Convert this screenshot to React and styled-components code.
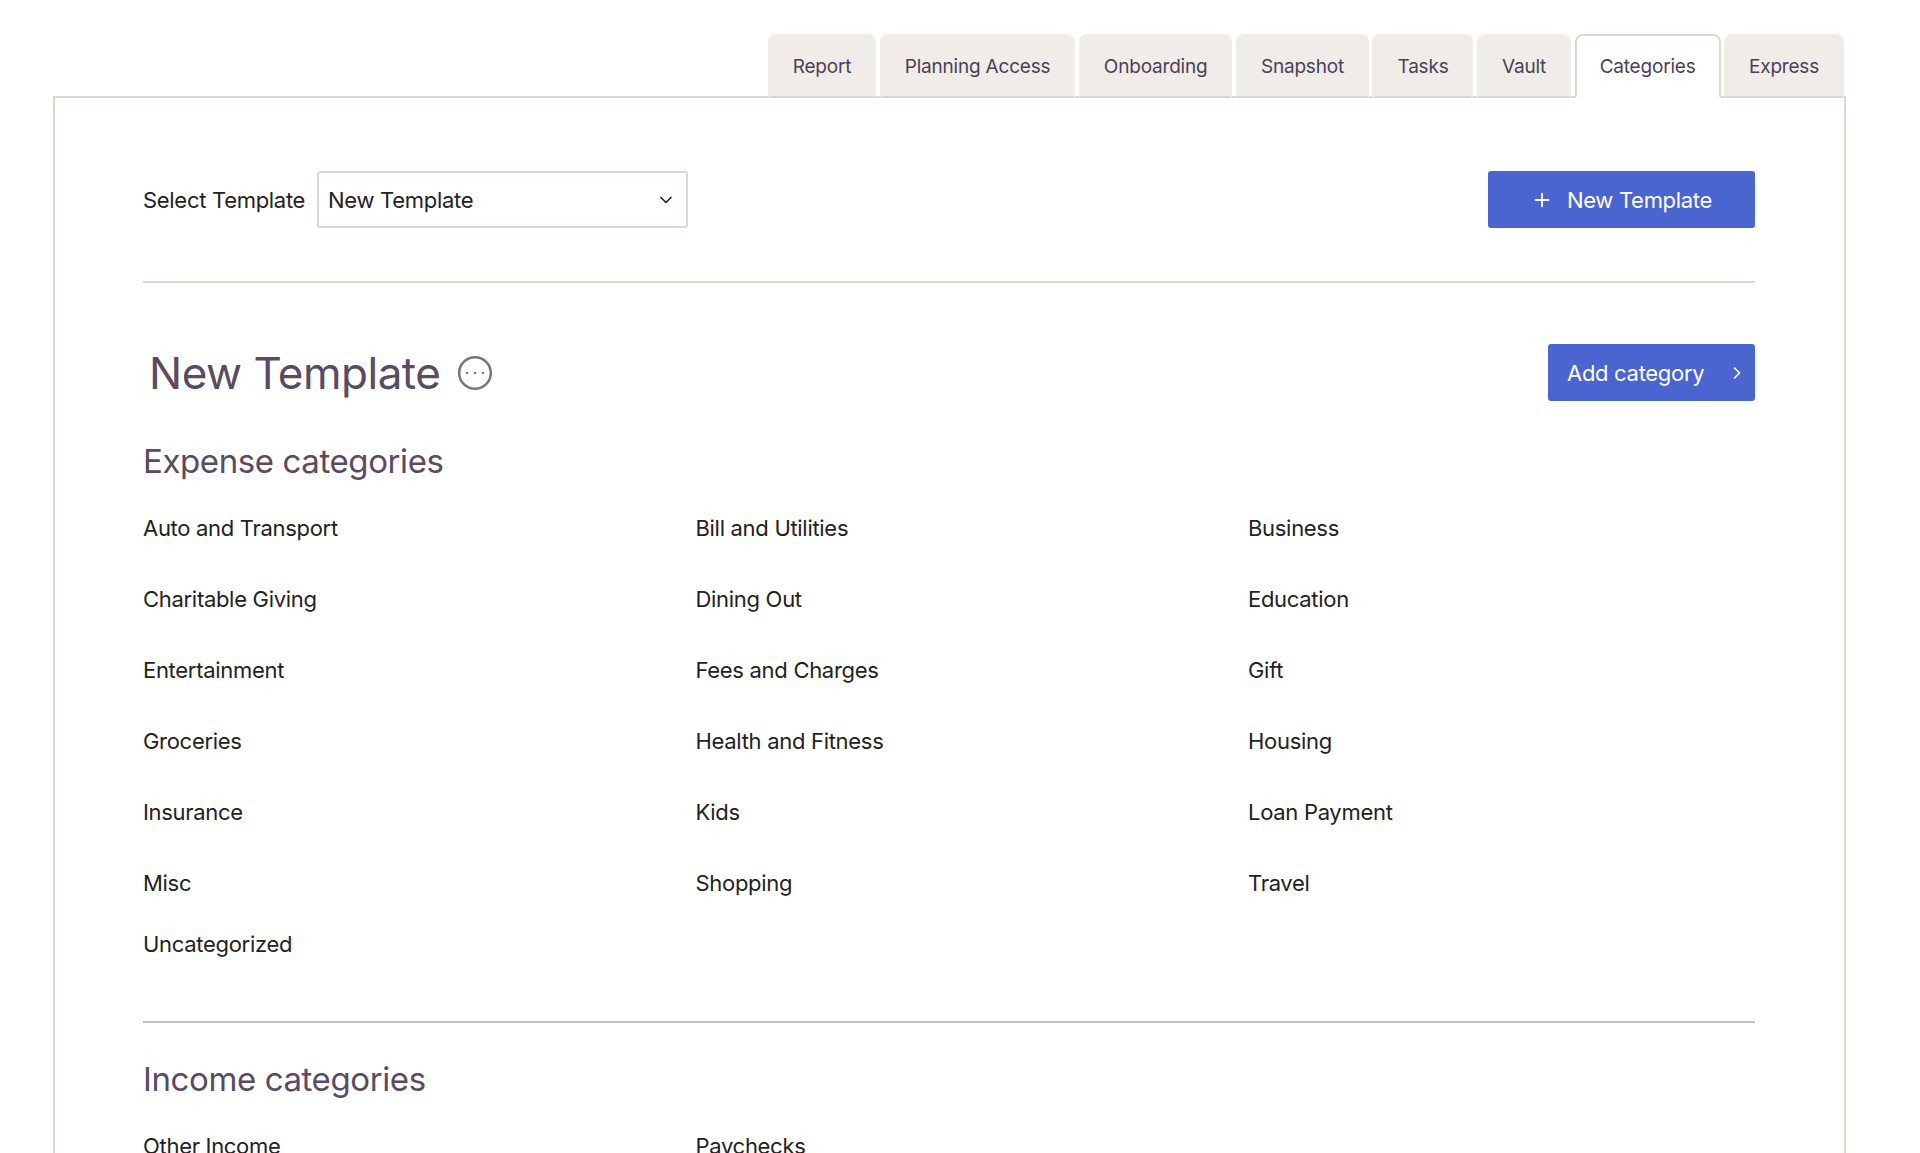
import React from 'react';
import styled, { createGlobalStyle } from 'styled-components';
import { ChevronDown, ChevronRight, CircleEllipsis, Plus } from 'lucide-react';

const TABS = ['Report', 'Planning Access', 'Onboarding', 'Snapshot', 'Tasks', 'Vault', 'Categories', 'Express'];

const EXPENSES = [
    'Auto and Transport', 'Bill and Utilities', 'Business',
    'Charitable Giving', 'Dining Out', 'Education',
    'Entertainment', 'Fees and Charges', 'Gift',
    'Groceries', 'Health and Fitness', 'Housing',
    'Insurance', 'Kids', 'Loan Payment',
    'Misc', 'Shopping', 'Travel',
];

const App = () => {
    return (
        <>
        <GlobalStyle />
        <Page>
            <TabBar>
                {TABS.map((tab) => (
                    <Tab key={tab} $active={tab === 'Categories'}>{tab}</Tab>
                ))}
            </TabBar>
            <Panel>
                <TemplateBar>
                    <SelectGroup>
                        <SelectLabel>Select Template</SelectLabel>
                        <SelectBox>
                            <span>New Template</span>
                            <ChevronDown size={20} strokeWidth={2} />
                        </SelectBox>
                    </SelectGroup>
                    <NewButton>
                        <Plus size={22} strokeWidth={2} />
                        New Template
                    </NewButton>
                </TemplateBar>
                <TitleRow>
                    <TitleGroup>
                        <Title>New Template</Title>
                        <MoreIcon size={38} strokeWidth={1.6} />
                    </TitleGroup>
                    <AddButton>
                        Add category
                        <ChevronRight size={20} strokeWidth={2} />
                    </AddButton>
                </TitleRow>
                <SectionTitle>Expense categories</SectionTitle>
                <CategoryGrid>
                    {EXPENSES.map((name) => (
                        <Category key={name}>{name}</Category>
                    ))}
                </CategoryGrid>
                <LastCategory>Uncategorized</LastCategory>
                <SectionDivider />
                <IncomeTitle>Income categories</IncomeTitle>
                <CategoryGrid>
                    <Category>Other Income</Category>
                    <Category>Paychecks</Category>
                </CategoryGrid>
            </Panel>
        </Page>
        </>
    );
};

export default App;

const GlobalStyle = createGlobalStyle`
    html, body {
        margin: 0;
        padding: 0;
        background: white;
        overflow: hidden;
    }
    body {
        font-family: "Inter", "Liberation Sans", sans-serif;
    }
`

const Page = styled.div`
    width: 1920px;
    height: 1153px;
    overflow: hidden;
    box-sizing: border-box;
    padding: 34px 74px 0 53px;
`

const TabBar = styled.div`
    display: flex;
    justify-content: flex-end;
    gap: 3.5px;
    padding-right: 2px;
    position: relative;
    z-index: 1;
`

const Tab = styled.div`
    box-sizing: border-box;
    height: 64px;
    padding: 0 23px;
    display: flex;
    align-items: center;
    font-size: 19px;
    letter-spacing: -0.2px;
    color: #4c3f57;
    background-color: ${(p) => (p.$active ? 'white' : '#f0ede8')};
    border-radius: 8px 8px 0 0;
    border: 2px solid ${(p) => (p.$active ? '#ddd8ce' : '#f0ede8')};
    border-bottom: ${(p) => (p.$active ? '2px solid white' : '2px solid #ddd8ce')};
`

const Panel = styled.div`
    box-sizing: border-box;
    height: 1100px;
    margin-top: -2px;
    padding: 74px 89px 0 88px;
    border: 2px solid #ddd8ce;
`

const TemplateBar = styled.div`
    display: flex;
    justify-content: space-between;
    align-items: center;
    height: 111px;
    box-sizing: border-box;
    padding-bottom: 54px;
    border-bottom: 2px solid #ddd8ce;
`

const SelectGroup = styled.div`
    display: flex;
    align-items: center;
    gap: 12px;
`

const SelectLabel = styled.span`
    font-size: 22px;
    letter-spacing: -0.3px;
    color: #222;
`

const SelectBox = styled.div`
    box-sizing: border-box;
    width: 371px;
    height: 57px;
    display: flex;
    align-items: center;
    justify-content: space-between;
    padding: 0 10px 0 9px;
    font-size: 22px;
    letter-spacing: -0.3px;
    color: #222;
    border: 2px solid #ddd8ce;
    border-radius: 3px;
`

const NewButton = styled.div`
    box-sizing: border-box;
    width: 267px;
    height: 57px;
    display: flex;
    align-items: center;
    justify-content: center;
    gap: 14px;
    font-size: 22px;
    letter-spacing: -0.3px;
    color: white;
    background-color: #4a64d0;
    border-radius: 3px;
`

const TitleRow = styled.div`
    display: flex;
    justify-content: space-between;
    align-items: center;
    margin-top: 61px;
    height: 57px;
`

const TitleGroup = styled.div`
    display: flex;
    align-items: center;
    gap: 16px;
    padding-left: 6px;
`

const Title = styled.h1`
    margin: 0;
    font-size: 44px;
    font-weight: 400;
    letter-spacing: -0.5px;
    color: #5a4a63;
`

const MoreIcon = styled(CircleEllipsis)`
    color: #777;
`

const AddButton = styled.div`
    box-sizing: border-box;
    width: 207px;
    height: 57px;
    display: flex;
    align-items: center;
    justify-content: space-between;
    padding: 0 8px 0 19px;
    font-size: 22px;
    letter-spacing: -0.3px;
    color: white;
    background-color: #4a64d0;
    border-radius: 3px;
`

const SectionTitle = styled.h2`
    margin: 38px 0 0;
    font-size: 33px;
    line-height: 44px;
    font-weight: 400;
    letter-spacing: -0.4px;
    color: #5a4a63;
`

const IncomeTitle = styled(SectionTitle)`
    margin-top: 34px;
`

const CategoryGrid = styled.div`
    display: grid;
    grid-template-columns: repeat(3, 508px);
    column-gap: 44.5px;
    row-gap: 41px;
    margin-top: 30px;
`

const Category = styled.div`
    font-size: 22px;
    line-height: 30px;
    letter-spacing: -0.3px;
    color: #222;
`

const LastCategory = styled(Category)`
    margin-top: 31px;
`

const SectionDivider = styled.div`
    height: 2px;
    margin-top: 62px;
    background-color: #bfbfbf;
`
